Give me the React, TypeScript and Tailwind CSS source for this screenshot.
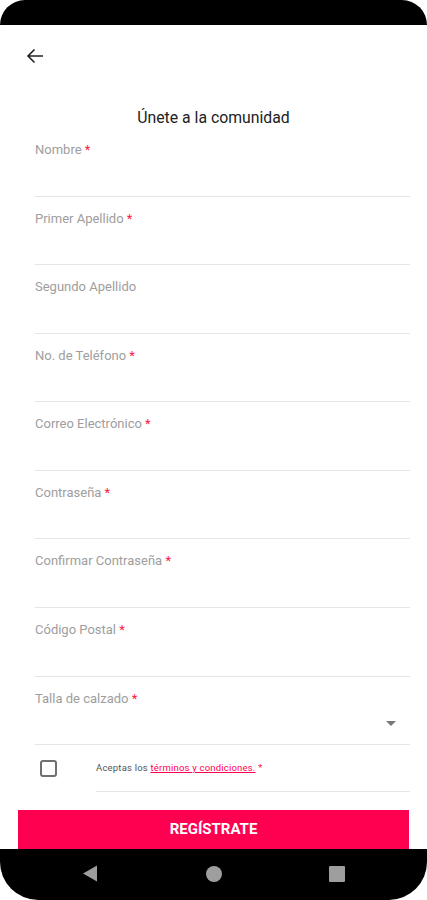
import React from 'react';

const fields = [
    { label: 'Nombre', required: true },
    { label: 'Primer Apellido', required: true },
    { label: 'Segundo Apellido', required: false },
    { label: 'No. de Teléfono', required: true },
    { label: 'Correo Electrónico', required: true },
    { label: 'Contraseña', required: true },
    { label: 'Confirmar Contraseña', required: true },
    { label: 'Código Postal', required: true },
];

const Field: React.FC<{ label: string; required: boolean; select?: boolean }> = ({ label, required, select }) => (
    <div className="h-[68.6px] ml-[35px] mr-[17px] border-b border-[#e6e6e6] pt-[14px] relative">
        <div className="text-[13px] leading-[16px] text-[#9e9e9e]">
            {label}
            {required && <span className="text-[#ff1744]"> *</span>}
        </div>
        {select && (
            <svg className="absolute right-[14px] bottom-[18px]" width="10" height="5" viewBox="0 0 10 5">
                <path d="M0 0h10L5 5z" fill="#777" />
            </svg>
        )}
    </div>
);

export default function App() {
    return (
        <div
            className="w-[427px] h-[900px] bg-white flex flex-col overflow-hidden"
            style={{ fontFamily: 'Roboto, "Noto Sans", sans-serif' }}
        >
            {/* status bar */}
            <div className="h-[25px] bg-black rounded-t-[38px] shrink-0" />

            {/* header */}
            <div className="h-[103px] shrink-0 flex flex-col">
                <button className="mt-[22px] ml-[26px] w-[20px] h-[18px] flex items-center">
                    <svg width="18" height="16" viewBox="0 0 18 16" fill="none">
                        <path d="M17 8H2M8.5 1.5L2 8l6.5 6.5" stroke="#222" strokeWidth="1.6" />
                    </svg>
                </button>
                <h1 className="mt-[44px] text-center text-[15.8px] leading-[20px] text-[#222]">Únete a la comunidad</h1>
            </div>

            {fields.map((f) => (
                <Field key={f.label} label={f.label} required={f.required} />
            ))}
            <Field label="Talla de calzado" required select />

            {/* terms */}
            <div className="h-[47px] shrink-0 flex items-center">
                <div className="ml-[40px] w-[17px] h-[17px] border-2 border-[#707070] rounded-[3px]" />
                <div className="ml-[39px] mr-[17px] flex-1 h-full flex items-center border-b border-[#e6e6e6]">
                    <span className="text-[9.5px] tracking-[0.2px] text-[#555]">
                        Aceptas los{' '}
                        <span className="text-[#ff0050] underline">términos y condiciones.</span>
                        <span className="text-[#ff1744]"> *</span>
                    </span>
                </div>
            </div>

            <button className="mt-[18px] mx-[18px] h-[39px] shrink-0 bg-[#ff0050] text-white font-bold text-[15px] flex items-center justify-center">
                REGÍSTRATE
            </button>

            {/* navigation bar */}
            <div className="h-[51px] shrink-0 bg-black rounded-b-[38px] flex items-center justify-between px-[82px] pb-[2px]">
                <svg width="16" height="17" viewBox="0 0 16 17">
                    <path d="M15 0.5v16L1 8.5z" fill="#9e9e9e" />
                </svg>
                <div className="w-[16px] h-[16px] rounded-full bg-[#9e9e9e]" />
                <div className="w-[16px] h-[16px] rounded-[1px] bg-[#9e9e9e]" />
            </div>
        </div>
    );
}
